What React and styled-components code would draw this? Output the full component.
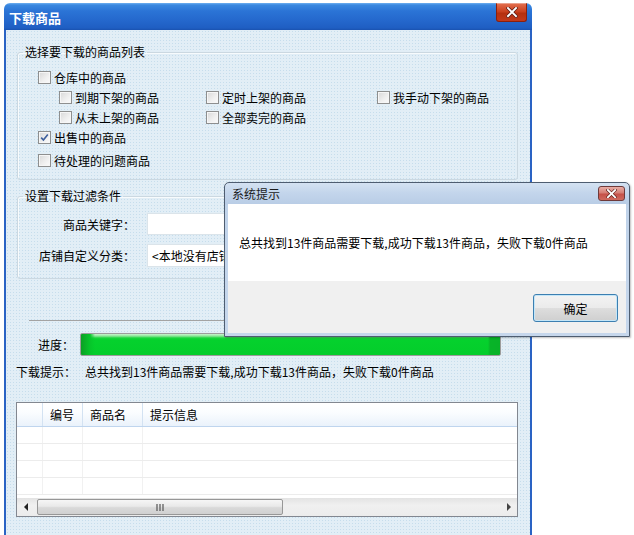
import React from 'react';
import styled, { createGlobalStyle } from 'styled-components';

const Global = createGlobalStyle`
  html, body { margin: 0; padding: 0; background: #fff; overflow: hidden; }
  body {
    font-family: "Noto Sans CJK SC", "Liberation Sans", sans-serif;
    font-size: 12px;
    color: #000;
  }
`;

const Page = styled.div`
  position: relative;
  width: 634px;
  height: 535px;
  box-sizing: border-box;
  padding: 3px 0 0 4px;
`;

const Window = styled.div`
  width: 528px;
  height: 532px;
  display: flex;
  flex-direction: column;
`;

const TitleBar = styled.div`
  height: 27px;
  flex: none;
  display: flex;
  justify-content: space-between;
  align-items: center;
  padding: 0 5px 0 5px;
  border-radius: 6px 6px 0 0;
  background: linear-gradient(to bottom, #6fb0f0 0, #3a88e0 2px, #2b74d6 8px, #2467cc 18px, #1f5ec2 25px, #1a52b0 27px);
`;

const Title = styled.span`
  color: #fff;
  font-weight: bold;
  font-size: 13px;
  line-height: 27px;
  padding-top: 1px;
`;

const MainClose = styled.div`
  align-self: flex-start;
  width: 31px;
  height: 19px;
  box-sizing: border-box;
  border: 1px solid #8c1f0c;
  border-top: 1px solid #e9a08c;
  border-radius: 0 0 3px 3px;
  background: linear-gradient(to bottom, #e26c4c 0, #c9401e 45%, #b5300f 55%, #c2391a 100%);
  display: flex;
  align-items: center;
  justify-content: center;
`;

const Body = styled.div`
  flex: 1;
  border-left: 2px solid #2a63c4;
  border-right: 2px solid #2a63c4;
  background-color: #e2eef6;
  background-image: radial-gradient(circle, rgba(175, 208, 228, 0.55) 0.6px, transparent 0.9px);
  background-size: 3px 3px;
  display: flex;
  flex-direction: column;
`;

const Group = styled.fieldset`
  margin: ${(p) => p.$top}px 0 0 11px;
  width: 501px;
  box-sizing: border-box;
  padding: 0 0 ${(p) => p.$bottom}px 0;
  border: 1px solid #cbd8e1;
  box-shadow: inset 1px 1px 0 #f7fbfd;
  border-radius: 3px;
  min-width: 0;
`;

const Legend = styled.legend`
  margin-left: 5px;
  padding: 0 2px;
  line-height: 16px;
  height: 16px;
  font-size: 12px;
`;

const CheckArea = styled.div`
  padding-left: 20px;
  display: flex;
  flex-direction: column;
`;

const CheckRow = styled.label`
  display: flex;
  align-items: center;
  height: ${(p) => p.$h || 20}px;
  margin-top: ${(p) => p.$mt || 0}px;
  margin-left: ${(p) => p.$ml || 0}px;
`;

const SubGrid = styled.div`
  margin-left: 21px;
  display: grid;
  grid-template-columns: 147px 171px auto;
  grid-auto-rows: 20px;
`;

const Box = styled.span`
  width: 13px;
  height: 13px;
  box-sizing: border-box;
  flex: none;
  border: 1px solid #8e8f8f;
  background: linear-gradient(135deg, #d8d8d8 0%, #f0f0f0 60%, #fbfbfb 100%);
  box-shadow: inset 0 0 0 1px #f6f6f6;
  margin-right: 3px;
  display: flex;
  align-items: center;
  justify-content: center;
`;

const Check = ({ label, checked, h, mt, ml }) => (
  <CheckRow $h={h} $mt={mt} $ml={ml}>
    <Box>
      {checked && (
        <svg width="9" height="9" viewBox="0 0 9 9">
          <path d="M1.2 4.6 L3.4 7 L7.8 1.4" fill="none" stroke="#3d5f9c" strokeWidth="1.6" />
        </svg>
      )}
    </Box>
    <span>{label}</span>
  </CheckRow>
);

const FieldArea = styled.div`
  display: flex;
  flex-direction: column;
`;

const FieldRow = styled.div`
  display: flex;
  align-items: center;
  height: ${(p) => p.$h}px;
  margin-top: 9px;
`;

const FieldLabel = styled.span`
  width: 117px;
  text-align: right;
  margin-right: 12px;
  flex: none;
`;

const TextBox = styled.div`
  width: 340px;
  height: 100%;
  box-sizing: border-box;
  border: 1px solid #dbe4ea;
  background: #fff;
  display: flex;
  align-items: center;
  padding-left: 4px;
  white-space: nowrap;
  overflow: hidden;
`;

const Separator = styled.div`
  margin: 41px 0 0 23px;
  width: 476px;
  height: 1px;
  background: #a3a3a3;
  flex: none;
`;

const ProgressRow = styled.div`
  display: flex;
  align-items: center;
  height: 23px;
  margin-top: 12px;
  padding-left: 32px;
`;

const ProgressLabel = styled.span`
  width: 42px;
  flex: none;
`;

const Bar = styled.div`
  width: 421px;
  height: 23px;
  box-sizing: border-box;
  border: 1px solid #9c9c9c;
  border-radius: 2px;
  background:
    linear-gradient(to right, #0b9f24 0, #06c52a 9px, rgba(6, 210, 45, 0) 14px),
    linear-gradient(to left, #08b228 0, #08b428 10px, rgba(8, 180, 40, 0) 12px),
    linear-gradient(to bottom, #c8f4cd 0, #8fe69a 2px, #1ad43c 4px, #05d12d 6px, #04cd2b 100%);
`;

const HintRow = styled.div`
  display: flex;
  align-items: center;
  height: 16px;
  margin-top: 7px;
  padding-left: 10px;
  white-space: nowrap;
`;

const HintValue = styled.span`
  margin-left: 9px;
`;

const Table = styled.div`
  margin: 23px 0 0 10px;
  width: 502px;
  height: 115px;
  box-sizing: border-box;
  border: 1px solid #828790;
  background: #fff;
  display: flex;
  flex-direction: column;
  flex: none;
`;

const HeaderRow = styled.div`
  display: grid;
  grid-template-columns: 26px 40px 60px 1fr;
  height: 24px;
  box-sizing: border-box;
  border-bottom: 1px solid #bfd5ee;
  background: linear-gradient(to bottom, #ffffff 0, #fbfdff 40%, #eaf2fb 100%);
`;

const HeadCell = styled.div`
  border-right: ${(p) => (p.$last ? 'none' : '1px solid #d3e2f2')};
  padding-left: 7px;
  display: flex;
  align-items: center;
`;

const DataRow = styled.div`
  display: grid;
  grid-template-columns: 26px 40px 60px 1fr;
  height: 17px;
  box-sizing: border-box;
  border-bottom: 1px solid #ececec;
`;

const DataCell = styled.div`
  border-right: ${(p) => (p.$last ? 'none' : '1px solid #f1f1f1')};
`;

const Filler = styled.div`
  flex: 1;
`;

const ScrollBar = styled.div`
  height: 18px;
  flex: none;
  display: flex;
  align-items: center;
  background: linear-gradient(to bottom, #e3e3e3, #f0f0f0 40%, #ececec);
`;

const ArrowBtn = styled.div`
  width: 18px;
  height: 18px;
  flex: none;
  display: flex;
  align-items: center;
  justify-content: center;
`;

const Thumb = styled.div`
  width: 246px;
  height: 16px;
  margin-left: 2px;
  box-sizing: border-box;
  border: 1px solid #979797;
  border-radius: 2px;
  background: linear-gradient(to bottom, #f6f6f6 0, #e9e9e9 45%, #d9d9d9 55%, #d0d0d0 100%);
  display: flex;
  align-items: center;
  justify-content: center;
`;

const Track = styled.div`
  flex: 1;
`;

const Dialog = styled.div`
  position: absolute;
  left: 224px;
  top: 182px;
  width: 406px;
  height: 155px;
  box-sizing: border-box;
  border: 1px solid #4e5d70;
  border-radius: 5px 5px 0 0;
  background: linear-gradient(to bottom, #d4e2f2 0, #c3d5eb 10px, #b9cde6 21px, #c0d3ea 22px, #c6d7ec 100%);
  padding: 0 3px 3px;
  display: flex;
  flex-direction: column;
  box-shadow: 1px 1px 2px rgba(0, 0, 0, 0.25);
`;

const DialogTitleBar = styled.div`
  height: 21px;
  flex: none;
  display: flex;
  justify-content: space-between;
  padding-left: 4px;
`;

const DialogTitle = styled.span`
  line-height: 21px;
  color: #1b1b1b;
`;

const DialogClose = styled.div`
  width: 27px;
  height: 15px;
  margin-top: 3px;
  margin-right: 1px;
  box-sizing: border-box;
  border: 1px solid #6e3a3a;
  border-radius: 3px;
  background: linear-gradient(to bottom, #e9aea6 0, #d57e74 45%, #c65148 55%, #cf6a5e 100%);
  display: flex;
  align-items: center;
  justify-content: center;
`;

const MessageArea = styled.div`
  height: 77px;
  flex: none;
  background: #fff;
  display: flex;
  align-items: center;
  padding-left: 11px;
  white-space: nowrap;
`;

const Footer = styled.div`
  flex: 1;
  background: #f0f0f0;
  display: flex;
  justify-content: flex-end;
  align-items: flex-start;
  padding: 13px 8px 0 0;
`;

const OkButton = styled.div`
  width: 85px;
  height: 28px;
  box-sizing: border-box;
  border: 1px solid #3c7fb1;
  border-radius: 3px;
  background: linear-gradient(to bottom, #f3f3f3 0, #ebebeb 48%, #dddddd 52%, #cfcfcf 100%);
  box-shadow: inset 0 0 0 1px #c4e6f8;
  display: flex;
  align-items: center;
  justify-content: center;
`;

const XIcon = ({ size = 10 }) => (
  <svg width={size} height={size * 0.85} viewBox="0 0 12 10">
    <path d="M2 1 L10 9 M10 1 L2 9" stroke="#5a1a14" strokeWidth="3.4" strokeLinecap="square" />
    <path d="M2 1 L10 9 M10 1 L2 9" stroke="#fff" strokeWidth="2" strokeLinecap="square" />
  </svg>
);

const rows = [0, 1, 2, 3];
const msg = '总共找到13件商品需要下载,成功下载13件商品，失败下载0件商品';

export default function App() {
  return (
    <Page>
      <Global />
      <Window>
        <TitleBar>
          <Title>下载商品</Title>
          <MainClose>
            <XIcon size={12} />
          </MainClose>
        </TitleBar>
        <Body>
          <Group $top={14} $bottom={9}>
            <Legend>选择要下载的商品列表</Legend>
            <CheckArea>
              <Check label="仓库中的商品" h={19} mt={8} />
              <SubGrid>
                <Check label="到期下架的商品" />
                <Check label="定时上架的商品" />
                <Check label="我手动下架的商品" />
                <Check label="从未上架的商品" />
                <Check label="全部卖完的商品" />
              </SubGrid>
              <Check label="出售中的商品" checked />
              <Check label="待处理的问题商品" mt={3} />
            </CheckArea>
          </Group>
          <Group $top={8} $bottom={11}>
            <Legend>设置下载过滤条件</Legend>
            <FieldArea>
              <FieldRow $h={22}>
                <FieldLabel>商品关键字：</FieldLabel>
                <TextBox />
              </FieldRow>
              <FieldRow $h={23}>
                <FieldLabel>店铺自定义分类：</FieldLabel>
                <TextBox>&lt;本地没有店铺分类&gt;</TextBox>
              </FieldRow>
            </FieldArea>
          </Group>
          <Separator />
          <ProgressRow>
            <ProgressLabel>进度：</ProgressLabel>
            <Bar />
          </ProgressRow>
          <HintRow>
            <span>下载提示：</span>
            <HintValue>{msg}</HintValue>
          </HintRow>
          <Table>
            <HeaderRow>
              <HeadCell />
              <HeadCell>编号</HeadCell>
              <HeadCell>商品名</HeadCell>
              <HeadCell $last>提示信息</HeadCell>
            </HeaderRow>
            {rows.map((r) => (
              <DataRow key={r}>
                <DataCell />
                <DataCell />
                <DataCell />
                <DataCell $last />
              </DataRow>
            ))}
            <Filler />
            <ScrollBar>
              <ArrowBtn>
                <svg width="5" height="8" viewBox="0 0 5 8">
                  <path d="M4 0 L0 4 L4 8 Z" fill="#222" />
                </svg>
              </ArrowBtn>
              <Thumb>
                <svg width="9" height="7" viewBox="0 0 9 7">
                  <path d="M1 0 V7 M4 0 V7 M7 0 V7" stroke="#555" strokeWidth="1.2" />
                </svg>
              </Thumb>
              <Track />
              <ArrowBtn>
                <svg width="5" height="8" viewBox="0 0 5 8">
                  <path d="M1 0 L5 4 L1 8 Z" fill="#444" />
                </svg>
              </ArrowBtn>
            </ScrollBar>
          </Table>
        </Body>
      </Window>

      <Dialog>
        <DialogTitleBar>
          <DialogTitle>系统提示</DialogTitle>
          <DialogClose>
            <XIcon size={11} />
          </DialogClose>
        </DialogTitleBar>
        <MessageArea>{msg}</MessageArea>
        <Footer>
          <OkButton>确定</OkButton>
        </Footer>
      </Dialog>
    </Page>
  );
}
